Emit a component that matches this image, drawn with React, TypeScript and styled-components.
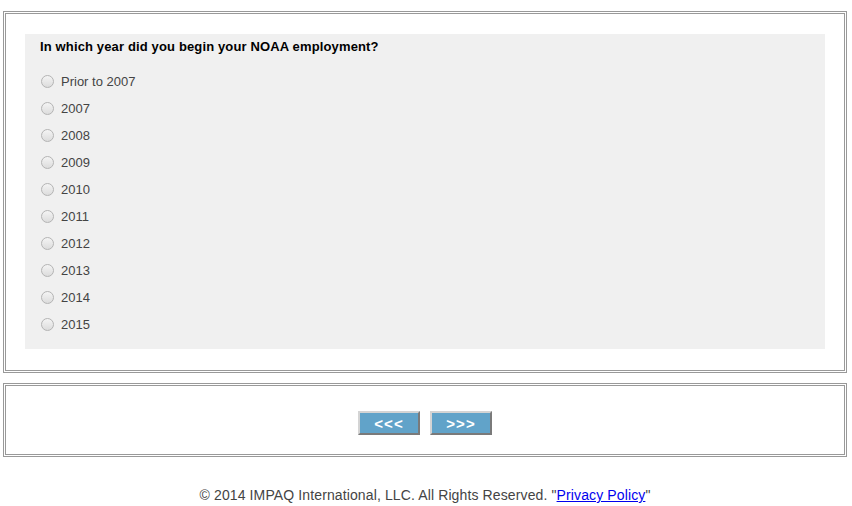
import styled, { createGlobalStyle } from 'styled-components';

const YEARS = ['Prior to 2007', '2007', '2008', '2009', '2010', '2011', '2012', '2013', '2014', '2015'];

export default function App() {
    return (
        <>
            <GlobalStyle />
            <Page>
                <Frame>
                    <QuestionPanel>
                        <Question>In which year did you begin your NOAA employment?</Question>
                        <Options>
                            {YEARS.map((year) => (
                                <Option key = { year }>
                                    <Radio type = 'radio' name = 'startYear' value = { year } />
                                    <span>{year}</span>
                                </Option>
                            ))}
                        </Options>
                    </QuestionPanel>
                </Frame>

                <NavFrame>
                    <NavButton type = 'button'>&lt;&lt;&lt;</NavButton>
                    <NavButton type = 'button'>&gt;&gt;&gt;</NavButton>
                </NavFrame>

                <Footer>
                    © 2014 IMPAQ International, LLC. All Rights Reserved. "<a href = '#'>Privacy Policy</a>"
                </Footer>
            </Page>
        </>
    );
}

/* Styles */
const GlobalStyle = createGlobalStyle`
  body {
    margin: 0;
    background: #fff;
    font-family: Arial, "Liberation Sans", sans-serif;
  }
`;

const Page = styled('div')({
    width:   844,
    padding: '11px 0 0 3px',
});

const Frame = styled('div')({
    border:  '3px double #999',
    padding: '20px 19px 21px',
});

const QuestionPanel = styled('div')({
    backgroundColor: '#f0f0f0',
    padding:         '5px 15px 11px',
});

const Question = styled('div')({
    fontSize:      13,
    fontWeight:    'bold',
    lineHeight:    '16px',
    letterSpacing: 0.14,
    color:         '#000',
    marginBottom:  13,
});

const Options = styled('div')({
    display:       'flex',
    flexDirection: 'column',
});

const Option = styled('label')({
    display:    'flex',
    alignItems: 'center',
    height:     27,
    fontSize:   13,
    color:      '#444',
});

const Radio = styled('input')({
    appearance:   'none',
    width:        13,
    height:       13,
    margin:       '0 7px 0 1px',
    borderRadius: '50%',
    border:       '1px solid #b4b4b4',
    background:   'linear-gradient(#f4f4f4, #dcdcdc)',
    boxSizing:    'border-box',
});

const NavFrame = styled('div')({
    marginTop:      10,
    border:         '3px double #999',
    padding:        '25px 0 19px',
    display:        'flex',
    justifyContent: 'center',
    gap:            10,
});

const NavButton = styled('button')({
    width:           62,
    height:          24,
    padding:         0,
    border:          '2px solid',
    borderColor:     '#d4d4d4 #7a7a7a #7a7a7a #d4d4d4',
    backgroundColor: '#61a3c9',
    color:           '#fff',
    fontFamily:      'Arial, "Liberation Sans", sans-serif',
    fontSize:        15,
    fontWeight:      'bold',
    letterSpacing:   1,
    cursor:          'pointer',
});

const Footer = styled('div')({
    marginTop:     30,
    textAlign:     'center',
    fontSize:      14,
    lineHeight:    '16px',
    letterSpacing: 0.12,
    color:         '#444',
    '& a':         { color: '#00e' },
});
